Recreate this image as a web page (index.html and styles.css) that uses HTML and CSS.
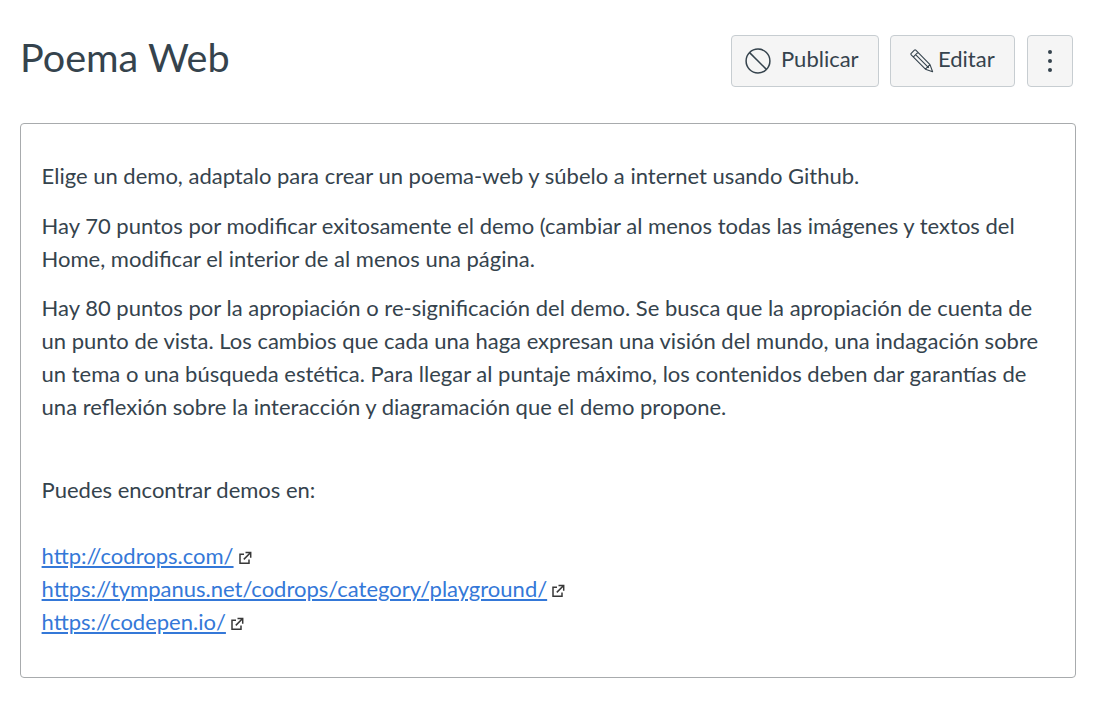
FILE: index.html
```html
<!DOCTYPE html>
<html lang="es">
<head>
<meta charset="utf-8">
<title>Poema Web</title>
<link rel="stylesheet" href="styles.css">
</head>
<body>
<header class="header">
  <h1 class="title">Poema Web</h1>
  <div class="actions">
    <button class="btn btn-publish">
      <svg class="icon-ban" viewBox="0 0 26 26" width="26" height="26"><circle cx="13" cy="13" r="11.9" fill="none" stroke="currentColor" stroke-width="1.5"/><path d="M4.6 4.6L21.4 21.4" stroke="currentColor" stroke-width="1.5" fill="none"/></svg>
      <span>Publicar</span>
    </button>
    <button class="btn btn-edit">
      <svg class="icon-pencil" viewBox="0 0 24 24" width="24" height="24"><path d="M1.2 4.4L4.4 1.2a1 1 0 0 1 1.4 0L20 15.6l2.6 7.2-7.2-2.6L1.2 5.8a1 1 0 0 1 0-1.4zM3.4 7.9L7.9 3.4M5.6 5.7l13.2 13.2M15.4 20.2l4.8-4.8" fill="none" stroke="currentColor" stroke-width="1.1" stroke-linejoin="round"/></svg>
      <span>Editar</span>
    </button>
    <button class="btn btn-more" aria-label="Más">
      <span class="dots"><i></i><i></i><i></i></span>
    </button>
  </div>
</header>
<main class="card">
  <p>Elige un demo, adaptalo para crear un poema-web y súbelo a internet usando Github.</p>
  <p>Hay 70 puntos por modificar exitosamente el demo (cambiar al menos todas las imágenes y textos del Home, modificar el interior de al menos una página.</p>
  <p>Hay 80 puntos por la apropiación o re-significación del demo. Se busca que la apropiación de cuenta de un punto de vista. Los cambios que cada una haga expresan una visión del mundo, una indagación sobre un tema o una búsqueda estética. Para llegar al puntaje máximo, los contenidos deben dar garantías de una reflexión sobre la interacción y diagramación que el demo propone.</p>
  <p class="spaced">Puedes encontrar demos en:</p>
  <p class="spaced links">
    <a href="#">http://codrops.com/</a><svg class="ext" viewBox="0 0 14 14" width="14" height="14"><use href="#ext"/></svg><br>
    <a href="#">https://tympanus.net/codrops/category/playground/</a><svg class="ext" viewBox="0 0 14 14" width="14" height="14"><use href="#ext"/></svg><br>
    <a href="#">https://codepen.io/</a><svg class="ext" viewBox="0 0 14 14" width="14" height="14"><use href="#ext"/></svg>
  </p>
</main>
<svg class="defs" width="0" height="0"><symbol id="ext" viewBox="0 0 14 14"><path d="M6 3.2H2v9h9V8.5M7.5 1.5h5.2v5.2M12.4 1.8L5.8 8.4" fill="none" stroke="#383838" stroke-width="1.5"/></symbol></svg>
</body>
</html>
```
FILE: styles.css
```css
* { box-sizing: border-box; }
html, body { margin: 0; padding: 0; background: #fff; }
body {
  width: 1102px;
  padding: 20px 26px 0 20px;
  font-family: Lato, "Liberation Sans", sans-serif;
  color: #35434d;
  overflow: hidden;
}
.header {
  display: flex;
  justify-content: space-between;
  align-items: flex-start;
  height: 103px;
}
.title {
  margin: 13px 0 0;
  font-size: 39.6px;
  line-height: 48px;
  font-weight: 400;
}
.actions {
  display: flex;
  gap: 11px;
  margin-top: 15px;
  margin-right: 3px;
}
.btn {
  display: flex;
  align-items: center;
  height: 52px;
  background: #f5f5f5;
  border: 1px solid #c7cdd1;
  border-radius: 4px;
  color: #35434d;
  font: 400 22px/33px Lato, "Liberation Sans", sans-serif;
  padding: 0 0 5px;
}
.btn-publish { width: 148px; gap: 10.5px; padding-left: 12.5px; }
.btn-edit { width: 125px; gap: 4px; padding-left: 19px; }
.btn-more { width: 46px; margin-left: 1px; justify-content: center; padding: 0; }
.dots { display: flex; flex-direction: column; gap: 4.5px; }
.dots i { display: block; width: 4.5px; height: 4.5px; border-radius: 50%; background: #35434d; }
.icon-ban, .icon-pencil { margin-top: 4px; }
.card {
  width: 1056px;
  height: 555px;
  border: 1px solid #a8abad;
  border-radius: 4px;
  padding: 35px 20.6px 0;
  font-size: 22px;
  line-height: 33px;
}
.card p { margin: 0 0 16.5px; }
.card p.spaced { margin-top: 50px; }
.card p.links { margin-top: 32.5px; }
.card a { color: #3478d8; text-decoration: underline; }
.ext { margin-left: 4px; vertical-align: -1px; }
.defs { position: absolute; }
```
